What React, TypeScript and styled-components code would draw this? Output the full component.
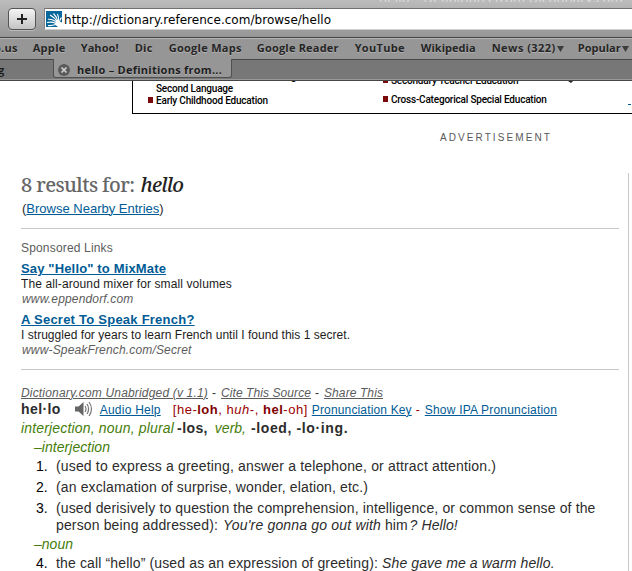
import React from "react";
import styled, { createGlobalStyle } from "styled-components";

const sans = '"Liberation Sans", Arial, sans-serif';
const chrome = '"Open Sans", "Noto Sans", sans-serif';

const Global = createGlobalStyle`
  * { box-sizing: border-box; }
  body { margin: 0; background: #fff; }
`;

const Page = styled.div`
  width: 632px;
  height: 571px;
  display: flex;
  flex-direction: column;
  overflow: hidden;
  background: #fff;
  font-family: ${sans};
  white-space: nowrap;
`;

/* ---------- browser chrome ---------- */

const AddressBar = styled.header`
  flex: none;
  height: 37px;
  display: grid;
  grid-template-rows: 8px 22px;
  background: linear-gradient(#bcbcbc, #969696);
`;

const WindowTitle = styled.div`
  height: 2px;
  padding-left: 379px;
  overflow: hidden;
  display: flex;
  align-items: flex-end;
  color: #dcdcdc;
  font: 13px/8px ${chrome};
  letter-spacing: 0.2px;
`;

const Controls = styled.div`
  display: flex;
  align-items: flex-start;
`;

const AddButton = styled.button`
  width: 28px;
  height: 22px;
  margin: 0 8px;
  padding: 0;
  display: grid;
  place-items: center;
  border: 1px solid #555;
  border-radius: 4px;
  background: linear-gradient(#f5f5f5, #c3c3c3);
  box-shadow: 0 1px 0 #b9b9b9;
`;

const UrlField = styled.div`
  flex: 1;
  height: 22px;
  padding: 2px 0 0 1px;
  display: flex;
  gap: 2px;
  border-top: 1px solid #707070;
  border-left: 1px solid #868686;
  border-bottom: 1px solid #cfcfcf;
  background: #fff;
`;

const Url = styled.span`
  color: #000;
  font: 12px/18px "DejaVu Sans", sans-serif;
  letter-spacing: 0.03px;
`;

const Bookmarks = styled.nav`
  flex: none;
  height: 22px;
  display: flex;
  align-items: flex-start;
  border-top: 1px solid #444;
  background: #969696;
  box-shadow: inset 0 1px 0 #b4b4b4;
`;

const Bookmark = styled.span<{ $gap: number; $track: number }>`
  margin-left: ${(p) => p.$gap}px;
  color: #252525;
  font: bold 11px/20px ${chrome};
  letter-spacing: ${(p) => p.$track}px;
  text-shadow: 0 1px 0 #b0b0b0;
`;

const Arrow = styled.svg`
  flex: none;
  width: 7px;
  height: 6px;
  margin: 8px 0 0 1px;
`;

const TabBar = styled.div`
  flex: none;
  height: 22px;
  display: flex;
  border-top: 1px solid #464646;
  border-bottom: 1px solid #464646;
  background: #777;
  box-shadow: inset 0 -1px 0 #999;
  color: #1d1d1d;
  font: bold 11px/19px ${chrome};
`;

const BackTab = styled.div`
  width: 53px;
  height: 19px;
  overflow: hidden;
  text-indent: -2px;
`;

const ActiveTab = styled.div`
  width: 179px;
  height: 19px;
  margin-top: -1px;
  padding: 2px 0 0 4px;
  display: flex;
  gap: 7px;
  border: 1px solid #505050;
  border-top: 0;
  border-radius: 0 0 3px 3px;
  background: #969696;
  line-height: 17px;
  letter-spacing: 0.26px;
  text-shadow: 0 1px 0 #b0b0b0;
`;

const CloseIcon = styled.svg`
  width: 12px;
  height: 12px;
  margin-top: 3px;
`;

/* ---------- advertisement ---------- */

const AdBox = styled.section`
  flex: none;
  height: 33px;
  margin-left: 132px;
  padding-left: 15px;
  display: flex;
  overflow: hidden;
  border-left: 1px solid #000;
  border-bottom: 1px solid #000;
`;

const AdColumn = styled.div<{ $width: number; $lift: number }>`
  flex: none;
  width: ${(p) => p.$width}px;
  margin-top: ${(p) => p.$lift}px;
  color: #000;
  font: 500 10px/12px Roboto, sans-serif;
  letter-spacing: -0.2px;
`;

const AdItem = styled.div<{ $bullet?: boolean; $height: number; $indent?: number }>`
  height: ${(p) => p.$height}px;
  padding-left: ${(p) => p.$indent ?? 0}px;
  display: flex;
  align-items: flex-start;
  gap: 3px;
  &::before {
    content: "";
    width: 5px;
    height: 6px;
    margin-top: 2px;
    background: ${(p) => (p.$bullet ? "#7c0a0a" : "transparent")};
  }
`;

const AdCue = styled.svg`
  flex: none;
  width: 64px;
  height: 32px;
`;

const AdLabel = styled.div`
  flex: none;
  height: 59px;
  padding: 17px 0 0 440px;
  color: #595959;
  font-size: 10px;
  line-height: 14px;
  letter-spacing: 2.08px;
`;

/* ---------- results ---------- */

const Results = styled.main`
  flex: 1;
  width: 629px;
  padding: 0 9px 0 21px;
  border-right: 1px solid #c8c8c8;
  color: #2c2c2c;
`;

const Heading = styled.h1`
  margin: 0;
  height: 27px;
  display: flex;
  color: #666;
  font: 500 20px/23px "Noto Serif", serif;
  letter-spacing: -0.62px;
`;

const Query = styled.em`
  margin-left: 6px;
  color: #222;
  letter-spacing: -0.8px;
`;

const Link = styled.a<{ $track?: number; $gap?: number; $muted?: boolean }>`
  margin-left: ${(p) => p.$gap ?? 0}px;
  color: ${(p) => (p.$muted ? "#5c5c5c" : "#005b96")};
  letter-spacing: ${(p) => p.$track ?? 0}px;
  font-style: ${(p) => (p.$muted ? "italic" : "normal")};
  text-decoration: underline;
  text-underline-offset: 1px;
  text-decoration-thickness: 1px;
`;

const Nearby = styled.div`
  height: 28px;
  padding-left: 1px;
  font-size: 13px;
  line-height: 17px;
`;

const Block = styled.section<{ $height: number; $pad: number }>`
  height: ${(p) => p.$height}px;
  padding-top: ${(p) => p.$pad}px;
  border-top: 1px solid #c8c8c8;
`;

const Label = styled.div`
  height: 21px;
  color: #5c5c5c;
  font-size: 12px;
  line-height: 16px;
  letter-spacing: 0.17px;
`;

const Sponsor = styled.article`
  height: 51px;
  font-size: 12px;
  line-height: 15px;
`;

const SponsorTitle = styled.div`
  height: 16px;
  font-size: 13px;
  font-weight: bold;
`;

const SponsorText = styled.div<{ $track: number }>`
  color: #1c1c1c;
  letter-spacing: ${(p) => p.$track}px;
`;

const SponsorUrl = styled.div`
  padding-left: 1px;
  color: #5c5c5c;
  font-style: italic;
  letter-spacing: 0.16px;
`;

const Line = styled.div<{ $height: number; $size: number }>`
  height: ${(p) => p.$height}px;
  display: flex;
  font-size: ${(p) => p.$size}px;
  line-height: ${(p) => p.$height}px;
`;

const Dash = styled.span<{ $red?: boolean }>`
  margin-left: 4px;
  margin-right: 5px;
  color: ${(p) => (p.$red ? "#900" : "#333")};
`;

const Strong = styled.b<{ $gap?: number; $track?: number }>`
  margin-left: ${(p) => p.$gap ?? 0}px;
  letter-spacing: ${(p) => p.$track ?? 0}px;
`;

const Speaker = styled.svg`
  width: 18px;
  height: 16px;
  margin: 0 0 0 14px;
`;

const Pron = styled.span`
  width: 139px;
  margin-left: 12px;
  color: #900;
  font-size: 13px;
  letter-spacing: 0.52px;
  b { color: #800000; }
`;

const Kind = styled.i<{ $gap?: number; $track?: number }>`
  margin-left: ${(p) => p.$gap ?? 0}px;
  color: #457d0a;
  letter-spacing: ${(p) => p.$track ?? 0}px;
`;

const Sense = styled.div<{ $height: number }>`
  height: ${(p) => p.$height}px;
  padding-left: 15px;
  display: grid;
  grid-template-columns: 20px 1fr;
  font-size: 14px;
  line-height: 17px;
`;

const LastSense = styled(Sense)`
  margin-top: 2px;
`;

const Num = styled.span`
  color: #000;
`;

const Phrase = styled.span<{ $track: number; $gap?: number }>`
  margin-left: ${(p) => p.$gap ?? 0}px;
  letter-spacing: ${(p) => p.$track}px;
`;

const Example = styled(Phrase).attrs({ as: "em" })``;

const bookmarks: [string, number, number][] = [
  ["o.us", -6, 0.25],
  ["Apple", 15, 0.33],
  ["Yahoo!", 15, 0.08],
  ["Dic", 16, 0.28],
  ["Google Maps", 16, 0.28],
  ["Google Reader", 15, 0.2],
  ["YouTube", 16, 0.29],
  ["Wikipedia", 16, 0.045],
];

const Down = () => (
  <Arrow viewBox="0 0 7 6">
    <path d="M0 0H7L3.5 6Z" fill="#3c3c3c" />
  </Arrow>
);

export default function App() {
  return (
    <Page>
      <Global />
      <AddressBar>
        <WindowTitle>hello – Definitions from Dictionary.com</WindowTitle>
        <Controls>
          <AddButton aria-label="Add bookmark">
            <svg width="10" height="10" viewBox="0 0 10 10">
              <path d="M5 0V10M0 5H10" stroke="#222" strokeWidth="2" />
            </svg>
          </AddButton>
          <UrlField>
            <svg width="16" height="16" viewBox="0 0 16 16">
              <rect width="16" height="16" fill="#08689b" />
              <path
                d="M10 13.5Q5 15 2 14.5M10 12.5Q6 10.5 1 11.5M11 12Q8 8 2 8.2M11.5 11.5Q9 6.5 4 4M12 11Q11 6 7.5 2.5M12.5 11Q13 6 11.5 3M13.5 11Q14 8 15.5 6.5"
                fill="none"
                stroke="#fff"
                strokeWidth="1.1"
              />
              <path d="M9 12.2L12 10L16 11.5V16H12L9.5 14Z" fill="#fff" />
            </svg>
            <Url>http://dictionary.reference.com/browse/hello</Url>
          </UrlField>
        </Controls>
      </AddressBar>

      <Bookmarks>
        {bookmarks.map(([name, gap, track]) => (
          <Bookmark key={name} $gap={gap} $track={track}>
            {name}
          </Bookmark>
        ))}
        <Bookmark $gap={16} $track={0.45}>News (322)</Bookmark>
        <Down />
        <Bookmark $gap={14} $track={0.02}>Popular</Bookmark>
        <Down />
      </Bookmarks>

      <TabBar>
        <BackTab>g</BackTab>
        <ActiveTab>
          <CloseIcon viewBox="0 0 12 12">
            <circle cx="6" cy="6" r="6" fill="#5b5b5b" />
            <path d="M3.5 3.5L8.5 8.5M8.5 3.5L3.5 8.5" stroke="#d0d0d0" strokeWidth="1.7" />
          </CloseIcon>
          <span>hello – Definitions from...</span>
        </ActiveTab>
      </TabBar>

      <AdBox>
        <AdColumn $width={235} $lift={-10}>
          <AdItem $height={12} $indent={101}>Teaching</AdItem>
          <AdItem $height={12}>Second Language</AdItem>
          <AdItem $bullet $height={13}>Early Childhood Education</AdItem>
        </AdColumn>
        <AdColumn $width={184} $lift={-6}>
          <AdItem $bullet $height={19}>Secondary Teacher Education</AdItem>
          <AdItem $bullet $height={13}>Cross-Categorical Special Education</AdItem>
        </AdColumn>
        <AdCue viewBox="0 0 64 32">
          <path d="M1 0H6L4 2Z" fill="#222" />
          <path d="M61 23.5H64" stroke="#005b96" />
        </AdCue>
      </AdBox>
      <AdLabel>ADVERTISEMENT</AdLabel>

      <Results>
        <Heading>
          8 results for: <Query>hello</Query>
        </Heading>
        <Nearby>
          (<Link>Browse Nearby Entries</Link>)
        </Nearby>

        <Block $height={141} $pad={11}>
          <Label>Sponsored Links</Label>
          <Sponsor>
            <SponsorTitle>
              <Link $track={0.155}>Say "Hello" to MixMate</Link>
            </SponsorTitle>
            <SponsorText $track={0.11}>The all-around mixer for small volumes</SponsorText>
            <SponsorUrl>www.eppendorf.com</SponsorUrl>
          </Sponsor>
          <Sponsor>
            <SponsorTitle>
              <Link $track={0.24}>A Secret To Speak French?</Link>
            </SponsorTitle>
            <SponsorText $track={0.033}>
              I struggled for years to learn French until I found this 1 secret.
            </SponsorText>
            <SponsorUrl>www-SpeakFrench.com/Secret</SponsorUrl>
          </Sponsor>
        </Block>

        <Block $height={202} $pad={15}>
          <Line $height={16} $size={12}>
            <Link $muted $track={0.176}>Dictionary.com Unabridged (v 1.1)</Link>
            <Dash>-</Dash>
            <Link $muted $track={0.08}>Cite This Source</Link>
            <Dash>-</Dash>
            <Link $muted $track={0.1}>Share This</Link>
          </Line>
          <Line $height={18} $size={12}>
            <Line $height={17} $size={14}>
              <Strong $track={0.4}>hel·lo</Strong>
            </Line>
            <Speaker viewBox="0 0 18 16">
              <path d="M0 5.5H3.5L8.5 1V15L3.5 10.5H0Z" fill="#666" />
              <path
                d="M10 5Q12 8 10 11M12 3Q15.2 8 12 13M14 1Q19 8 14 15"
                fill="none"
                stroke="#777"
                strokeWidth="1.2"
              />
            </Speaker>
            <Link $gap={7} $track={0.23}>Audio Help</Link>
            <Pron>
              [he-<b>loh</b>, h<i>uh</i>-, <b>hel</b>-oh]
            </Pron>
            <Link $track={0.155}>Pronunciation Key</Link>
            <Dash $red>-</Dash>
            <Link $track={0.2}>Show IPA Pronunciation</Link>
          </Line>
          <Line $height={18} $size={14}>
            <Kind $track={0.17}>interjection, noun, plural</Kind>
            <Strong $gap={3} $track={0.4}>-los,</Strong>
            <Kind $gap={7}>verb,</Kind>
            <Strong $gap={5} $track={0.62}>-loed, -lo·ing.</Strong>
          </Line>
          <Line $height={21} $size={14}>
            <Kind $gap={13} $track={0.04}>–interjection</Kind>
          </Line>
          <Sense $height={21}>
            <Num>1.</Num>
            <Phrase $track={0.158}>
              (used to express a greeting, answer a telephone, or attract attention.)
            </Phrase>
          </Sense>
          <Sense $height={21}>
            <Num>2.</Num>
            <Phrase $track={0.136}>(an exclamation of surprise, wonder, elation, etc.)</Phrase>
          </Sense>
          <Sense $height={36}>
            <Num>3.</Num>
            <div>
              <Phrase $track={0.132}>
                (used derisively to question the comprehension, intelligence, or common sense of the
              </Phrase>
              <br />
              <Phrase $track={0.135}>person being addressed):</Phrase>
              <Example $gap={5} $track={0.18}>You're gonna go out with</Example>
              <Phrase $gap={4} $track={0}>him</Phrase>
              <Example $gap={2} $track={0.1}>? Hello!</Example>
            </div>
          </Sense>
          <Line $height={17} $size={14}>
            <Kind $gap={13} $track={0.02}>–noun</Kind>
          </Line>
          <LastSense $height={17}>
            <Num>4.</Num>
            <div>
              <Phrase $track={0.144}>the call “hello” (used as an expression of greeting):</Phrase>
              <Example $gap={4} $track={0.12}>She gave me a warm hello.</Example>
            </div>
          </LastSense>
        </Block>
      </Results>
    </Page>
  );
}
